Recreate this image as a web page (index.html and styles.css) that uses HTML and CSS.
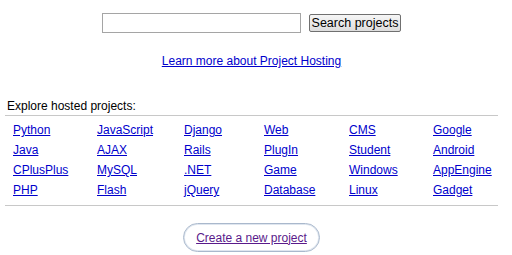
FILE: index.html
```html
<!DOCTYPE html>
<html>
<head>
<meta charset="utf-8">
<link rel="stylesheet" href="styles.css">
</head>
<body>
<div class="page">
  <form class="search">
    <input class="search-input" type="text">
    <button class="search-btn" type="button">Search projects</button>
  </form>
  <div class="learn"><a href="#">Learn more about Project Hosting</a></div>
  <div class="explore">
    <div class="explore-title">Explore hosted projects:</div>
    <div class="tags">
      <a href="#">Python</a><a href="#">JavaScript</a><a href="#">Django</a><a href="#">Web</a><a href="#">CMS</a><a href="#">Google</a>
      <a href="#">Java</a><a href="#">AJAX</a><a href="#">Rails</a><a href="#">PlugIn</a><a href="#">Student</a><a href="#">Android</a>
      <a href="#">CPlusPlus</a><a href="#">MySQL</a><a href="#">.NET</a><a href="#">Game</a><a href="#">Windows</a><a href="#">AppEngine</a>
      <a href="#">PHP</a><a href="#">Flash</a><a href="#">jQuery</a><a href="#">Database</a><a href="#">Linux</a><a href="#">Gadget</a>
    </div>
  </div>
  <div class="create-wrap"><a class="create" href="#">Create a new project</a></div>
</div>
</body>
</html>
```
FILE: styles.css
```css
html, body {
  margin: 0;
  padding: 0;
  background: #fff;
}
body {
  font-family: "Liberation Sans", Arial, sans-serif;
  font-size: 12px;
  color: #000;
}
a {
  color: #0000cc;
  text-decoration: underline;
}
.page {
  width: 503px;
  padding-top: 13px;
}
.search {
  display: flex;
  justify-content: center;
  align-items: center;
  gap: 8px;
  margin: 0;
  height: 20px;
}
.search-input {
  box-sizing: border-box;
  width: 199px;
  height: 20px;
  border: 1px solid #a5a5a5;
  margin: 0;
  padding: 0 2px;
}
.search-btn {
  box-sizing: border-box;
  width: 92px;
  height: 18px;
  margin: 0;
  padding: 0;
  white-space: nowrap;
  font-family: "Liberation Sans", Arial, sans-serif;
  font-size: 12.5px;
  color: #000;
  border: 1px solid #707070;
  border-radius: 2px;
  background: linear-gradient(#f6f6f6, #dddddd);
  line-height: 16px;
}
.learn {
  text-align: center;
  margin-top: 20px;
  line-height: 16px;
}
.explore {
  margin: 29px 5px 0 5px;
}
.explore-title {
  padding-left: 2px;
  line-height: 16px;
  padding-bottom: 1px;
  border-bottom: 1px solid #c8c8c8;
}
.tags {
  display: grid;
  grid-template-columns: 84px 87px 80px 85px 84px 1fr;
  grid-auto-rows: 20px;
  padding: 4px 0 5px 8px;
  border-bottom: 1px solid #c8c8c8;
  line-height: 20px;
}
.tags a {
  justify-self: start;
}
.create-wrap {
  display: flex;
  justify-content: center;
  margin-top: 17px;
}
.create {
  box-sizing: border-box;
  height: 29px;
  width: 137px;
  border: 1px solid #a9b8cc;
  border-radius: 15px;
  color: #5a1a8b;
  display: flex;
  align-items: center;
  justify-content: center;
  box-shadow: inset 0 0 0 1px #dfe6ef;
}
```
